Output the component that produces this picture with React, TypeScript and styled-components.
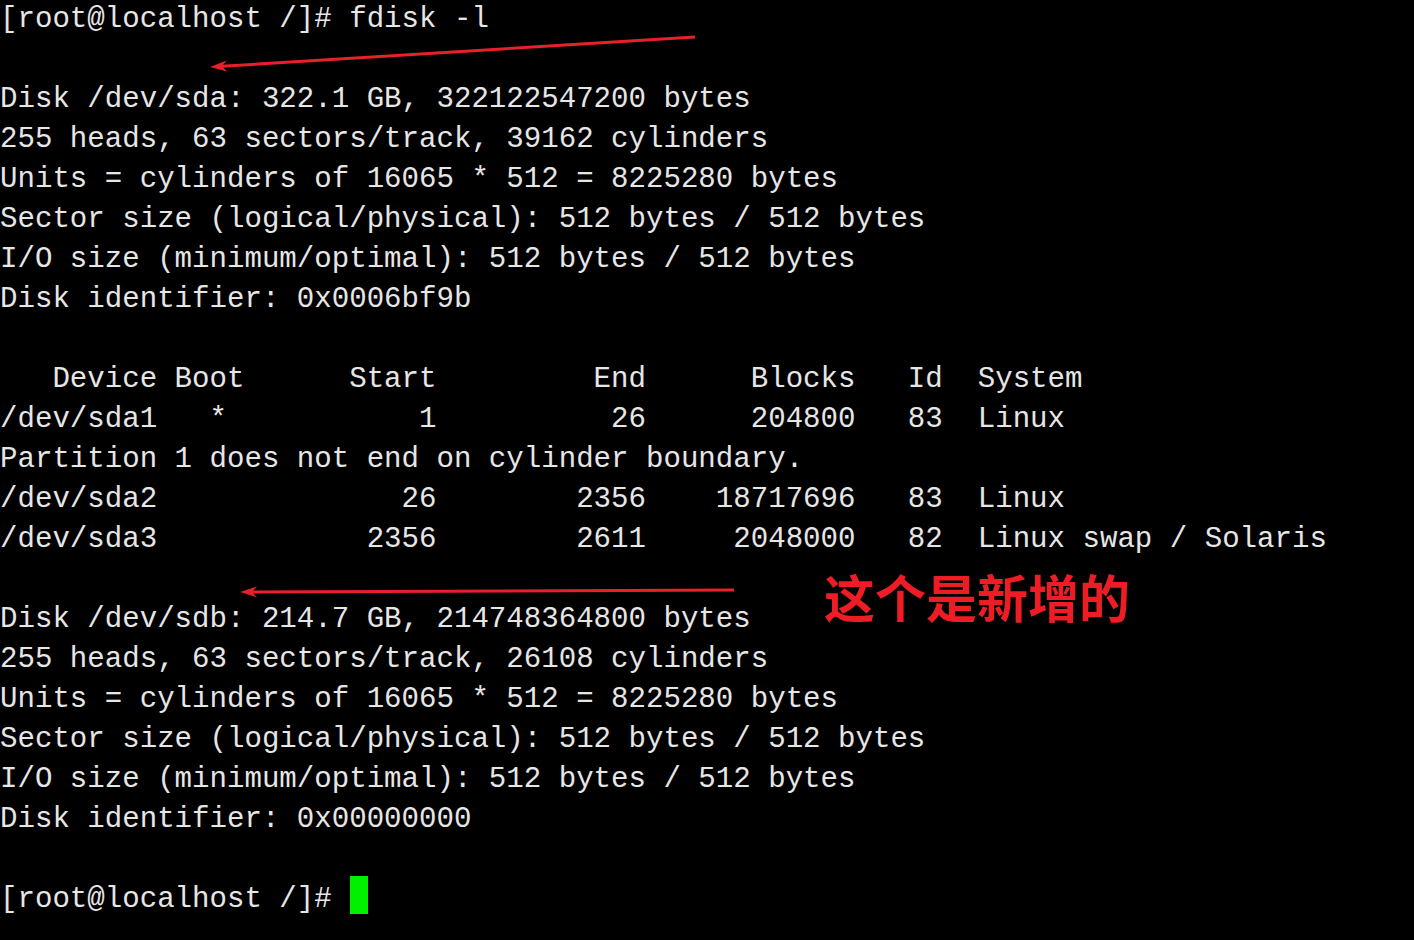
import React from "react";
import styled, { createGlobalStyle } from "styled-components";

const GlobalStyle = createGlobalStyle`
  html, body {
    margin: 0;
    padding: 0;
    background: #000;
  }
`;

const Screen = styled.div`
  position: relative;
  width: 1414px;
  height: 940px;
  background: #000;
  overflow: hidden;
`;

const Terminal = styled.div`
  display: flex;
  flex-direction: column;
  font-family: "Liberation Mono", "DejaVu Sans Mono", monospace;
  font-size: 29.1px;
  line-height: 40px;
  color: #e6e6e6;
`;

const Line = styled.div`
  white-space: pre;
  height: 40px;
`;

const Cursor = styled.span`
  display: inline-block;
  width: 18px;
  height: 38px;
  vertical-align: top;
  margin-top: -4px;
  margin-left: 1px;
  background: #00f000;
`;

const ArrowLayer = styled.svg`
  position: absolute;
  left: 0;
  top: 0;
  width: 1414px;
  height: 940px;
  pointer-events: none;
`;

const Note = styled.div`
  position: absolute;
  left: 824px;
  top: 571px;
  font-family: "Noto Sans CJK SC", "Noto Sans", sans-serif;
  font-weight: 700;
  font-size: 51px;
  line-height: 1;
  color: #ee1d25;
  white-space: nowrap;
`;

const lines: string[] = [
  "[root@localhost /]# fdisk -l",
  "",
  "Disk /dev/sda: 322.1 GB, 322122547200 bytes",
  "255 heads, 63 sectors/track, 39162 cylinders",
  "Units = cylinders of 16065 * 512 = 8225280 bytes",
  "Sector size (logical/physical): 512 bytes / 512 bytes",
  "I/O size (minimum/optimal): 512 bytes / 512 bytes",
  "Disk identifier: 0x0006bf9b",
  "",
  "   Device Boot      Start         End      Blocks   Id  System",
  "/dev/sda1   *           1          26      204800   83  Linux",
  "Partition 1 does not end on cylinder boundary.",
  "/dev/sda2              26        2356    18717696   83  Linux",
  "/dev/sda3            2356        2611     2048000   82  Linux swap / Solaris",
  "",
  "Disk /dev/sdb: 214.7 GB, 214748364800 bytes",
  "255 heads, 63 sectors/track, 26108 cylinders",
  "Units = cylinders of 16065 * 512 = 8225280 bytes",
  "Sector size (logical/physical): 512 bytes / 512 bytes",
  "I/O size (minimum/optimal): 512 bytes / 512 bytes",
  "Disk identifier: 0x00000000",
  "",
];

type Pt = [number, number];

function Arrow({ from, to }: { from: Pt; to: Pt }) {
  const dx = to[0] - from[0];
  const dy = to[1] - from[1];
  const len = Math.hypot(dx, dy);
  const ux = dx / len;
  const uy = dy / len;
  const nx = -uy;
  const ny = ux;
  const headLen = 17;
  const notch = 12;
  const half = 5.5;
  const back: Pt = [to[0] - ux * headLen, to[1] - uy * headLen];
  const n: Pt = [to[0] - ux * notch, to[1] - uy * notch];
  const b1: Pt = [back[0] + nx * half, back[1] + ny * half];
  const b2: Pt = [back[0] - nx * half, back[1] - ny * half];
  const pts = [to, b1, n, b2].map((p) => p.join(",")).join(" ");
  return (
    <g>
      <line
        x1={from[0]}
        y1={from[1]}
        x2={n[0]}
        y2={n[1]}
        stroke="#e8202a"
        strokeWidth={3}
      />
      <polygon points={pts} fill="#e8202a" />
    </g>
  );
}

export default function App() {
  return (
    <>
      <GlobalStyle />
      <Screen>
        <Terminal>
          {lines.map((l, i) => (
            <Line key={i}>{l}</Line>
          ))}
          <Line>
            {"[root@localhost /]# "}
            <Cursor />
          </Line>
        </Terminal>
        <ArrowLayer viewBox="0 0 1414 940">
          <Arrow from={[695, 37]} to={[210, 67]} />
          <Arrow from={[734, 590]} to={[240, 592]} />
        </ArrowLayer>
        <Note>这个是新增的</Note>
      </Screen>
    </>
  );
}
